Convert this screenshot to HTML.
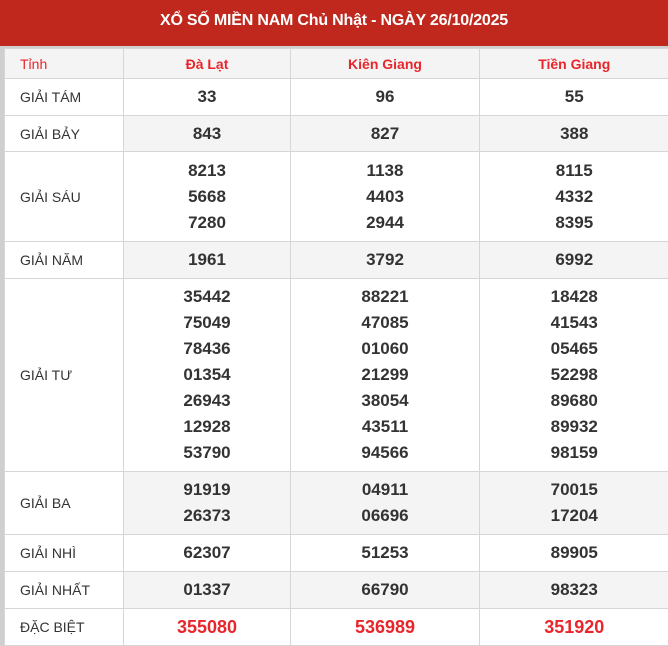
<!DOCTYPE html>
<html><head><meta charset="utf-8"><style>
*{margin:0;padding:0;box-sizing:border-box}
body{width:668px;height:646px;background:#fff;font-family:"Liberation Sans",Arial,sans-serif;overflow:hidden}
.h{height:46px;background:#c0281d;color:#fff;font-weight:bold;font-size:16px;text-align:center;line-height:42px;letter-spacing:-0.2px}
.wrap{border-left:4px solid #cfcfcf;border-top:2px solid #cfcfcf}
table{border-collapse:collapse;table-layout:fixed;width:664px}
td{border:1px solid #d6d6d6;text-align:center;font-weight:bold;font-size:17px;color:#333;line-height:26px;vertical-align:middle}
td.l{text-align:left;padding-left:15px;font-weight:normal;font-size:14px;color:#333;background:#fff}
tr.g td{background:#f4f4f4}
tr.g td.l{background:#fff}
tr.hd td{font-size:14px;color:#e8262b;height:30px;background:#f4f4f4}
tr.hd td.l{font-weight:normal;color:#e8262b}
tr td:last-child{border-right:none}
.r td{color:#e8262b;font-size:18px}
.r td.l{color:#333;font-size:14px}
</style></head><body>
<div class="h">XỔ SỐ MIỀN NAM Chủ Nhật - NGÀY 26/10/2025</div>
<div class="wrap"><table>
<colgroup><col style="width:119px"><col style="width:167px"><col style="width:189px"><col style="width:189px"></colgroup>
<tr class="hd"><td class="l">Tỉnh</td><td>Đà Lạt</td><td>Kiên Giang</td><td>Tiền Giang</td></tr>
<tr style="height:37px"><td class="l">GIẢI TÁM</td><td>33</td><td>96</td><td>55</td></tr>
<tr class="g" style="height:36px"><td class="l">GIẢI BẢY</td><td>843</td><td>827</td><td>388</td></tr>
<tr style="height:90px"><td class="l">GIẢI SÁU</td><td>8213<br>5668<br>7280</td><td>1138<br>4403<br>2944</td><td>8115<br>4332<br>8395</td></tr>
<tr class="g" style="height:37px"><td class="l">GIẢI NĂM</td><td>1961</td><td>3792</td><td>6992</td></tr>
<tr style="height:193px"><td class="l">GIẢI TƯ</td><td>35442<br>75049<br>78436<br>01354<br>26943<br>12928<br>53790</td><td>88221<br>47085<br>01060<br>21299<br>38054<br>43511<br>94566</td><td>18428<br>41543<br>05465<br>52298<br>89680<br>89932<br>98159</td></tr>
<tr class="g" style="height:63px"><td class="l">GIẢI BA</td><td>91919<br>26373</td><td>04911<br>06696</td><td>70015<br>17204</td></tr>
<tr style="height:37px"><td class="l">GIẢI NHÌ</td><td>62307</td><td>51253</td><td>89905</td></tr>
<tr class="g" style="height:37px"><td class="l">GIẢI NHẤT</td><td>01337</td><td>66790</td><td>98323</td></tr>
<tr class="r" style="height:37px"><td class="l">ĐẶC BIỆT</td><td>355080</td><td>536989</td><td>351920</td></tr>
</table></div>
</body></html>
